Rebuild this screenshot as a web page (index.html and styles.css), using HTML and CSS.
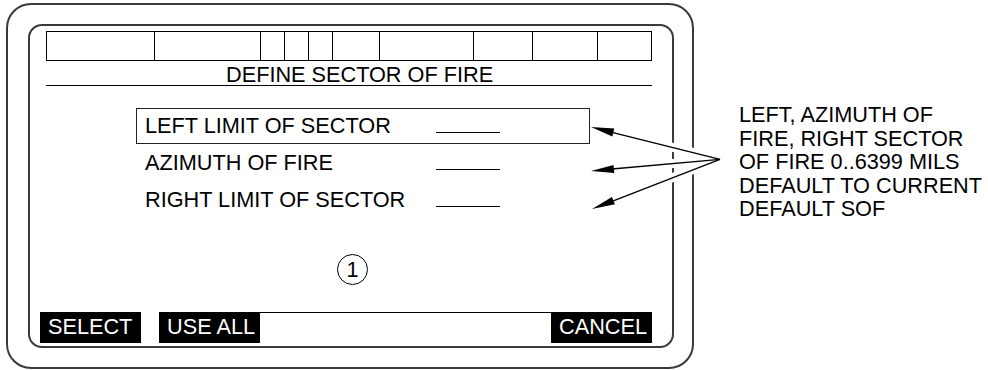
FILE: index.html
```html
<!DOCTYPE html>
<html>
<head>
<meta charset="utf-8">
<link rel="stylesheet" href="styles.css">
</head>
<body>
<div class="page">
  <div class="screen">
    <div class="panel">
      <div class="statusbar">
        <span></span><span></span><span></span><span></span><span></span>
        <span></span><span></span><span></span><span></span><span></span>
      </div>
      <div class="title">DEFINE SECTOR OF FIRE</div>
      <div class="fields">
        <div class="field selected"><span class="label">LEFT LIMIT OF SECTOR</span><span class="blank"></span></div>
        <div class="field"><span class="label">AZIMUTH OF FIRE</span><span class="blank"></span></div>
        <div class="field"><span class="label">RIGHT LIMIT OF SECTOR</span><span class="blank"></span></div>
      </div>
      <div class="callout">1</div>
      <div class="softkeys">
        <div class="key">SELECT</div>
        <div class="gap"></div>
        <div class="key">USE ALL</div>
        <div class="fill"></div>
        <div class="key">CANCEL</div>
      </div>
    </div>
  </div>
  <div class="note">LEFT, AZIMUTH OF<br>FIRE, RIGHT SECTOR<br>OF FIRE 0..6399 MILS<br>DEFAULT TO CURRENT<br>DEFAULT SOF</div>
  <svg class="arrows" width="988" height="370" viewBox="0 0 988 370">
    <g stroke="#fff" stroke-width="9" fill="none">
      <line x1="662" y1="144.6" x2="705" y2="155.3"/>
      <line x1="662" y1="164.4" x2="705" y2="160.4"/>
      <line x1="662" y1="181.7" x2="705" y2="164.9"/>
    </g>
    <g stroke="#000" stroke-width="1.3" fill="none">
      <line x1="720" y1="159.3" x2="612" y2="132.4"/>
      <line x1="720" y1="159.3" x2="612" y2="169"/>
      <line x1="720" y1="159.3" x2="612" y2="201.3"/>
    </g>
    <g fill="#000">
      <polygon points="591,127 612.3,136.4 614.3,128.6"/>
      <polygon points="591,171 614.3,172.9 613.5,164.9"/>
      <polygon points="592,209 614.9,204.3 611.9,196.9"/>
    </g>
  </svg>
</div>
</body>
</html>
```

FILE: styles.css
```css
* { box-sizing: border-box; }

html, body {
  margin: 0;
  padding: 0;
  background: #fff;
}

body {
  font-family: "Liberation Sans", Arial, sans-serif;
  font-size: 21.7px;
  line-height: 21px;
  color: #000;
}

.page {
  position: relative;
  width: 988px;
  height: 370px;
  display: flex;
  align-items: flex-start;
}

.screen {
  margin: 3px 0 0 6px;
  width: 688px;
  height: 366px;
  border: 2px solid #3a3a3a;
  border-radius: 25px;
  padding: 19px 18px 19px 20px;
}

.panel {
  width: 100%;
  height: 100%;
  border: 2px solid #3a3a3a;
  border-radius: 14px;
  padding: 5px 20px 3px 10px;
  display: flex;
  flex-direction: column;
}

.statusbar {
  margin-left: 6px;
  height: 30px;
  border: 1px solid #000;
  display: grid;
  grid-template-columns: 107px 106px 24px 24px 24px 47px 94px 59px 65px 54px;
}

.statusbar span + span {
  border-left: 1px solid #000;
}

.title {
  margin-left: 6px;
  height: 25px;
  padding: 3px 0 0 180px;
  border-bottom: 1px solid #000;
  white-space: nowrap;
}

.fields {
  margin: 22px 0 0 96px;
  width: 454px;
  display: flex;
  flex-direction: column;
  gap: 1px;
}

.field {
  border: 1px solid transparent;
  padding: 6px 0 7px 8px;
  display: flex;
  align-items: baseline;
}

.field.selected {
  border-color: #222;
}

.label {
  width: 291px;
  white-space: nowrap;
}

.blank {
  display: inline-block;
  width: 64px;
  height: 12px;
  border-bottom: 1px solid #000;
  margin-bottom: -2px;
}

.callout {
  margin: 36px 0 0 297px;
  width: 31px;
  height: 31px;
  border: 1px solid #000;
  border-radius: 50%;
  display: flex;
  align-items: center;
  justify-content: center;
  line-height: 1;
}

.softkeys {
  margin-top: auto;
  height: 31px;
  display: flex;
}

.key {
  width: 101px;
  height: 31px;
  background: #000;
  color: #fff;
  padding: 4px 0 6px 8px;
  white-space: nowrap;
}

.gap {
  width: 18px;
}

.fill {
  flex: 1;
  border-top: 1px solid #000;
}

.note {
  margin: 103px 0 0 45px;
  line-height: 23.5px;
  white-space: nowrap;
}

.arrows {
  position: absolute;
  left: 0;
  top: 0;
  pointer-events: none;
}
```
